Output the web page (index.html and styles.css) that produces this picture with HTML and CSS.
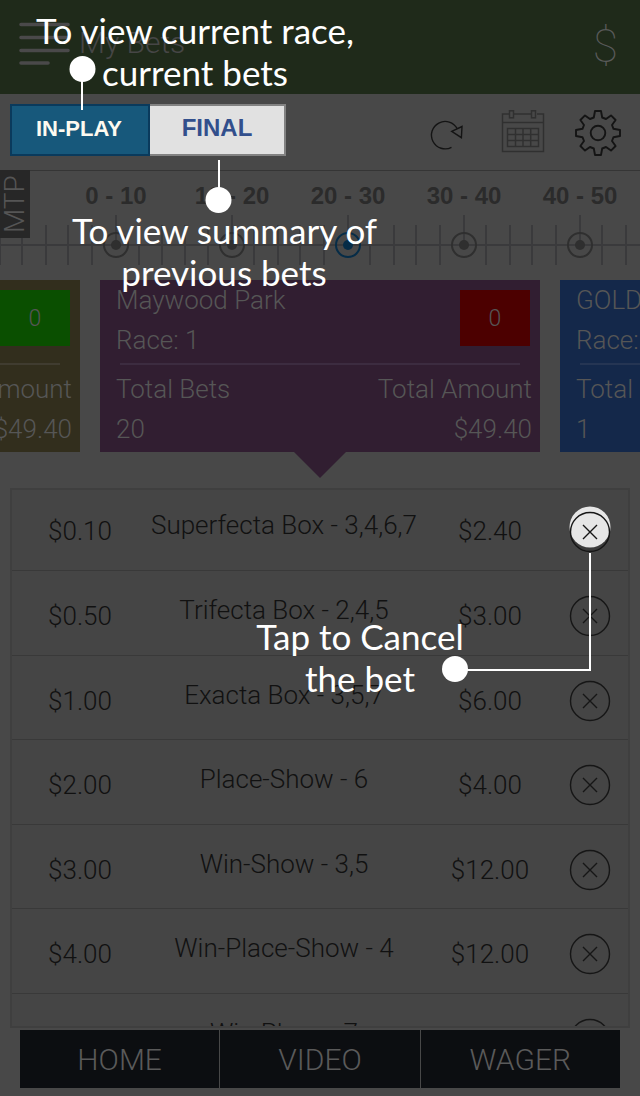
FILE: index.html
```html
<!DOCTYPE html>
<html lang="en">
<head>
<meta charset="utf-8">
<meta name="viewport" content="width=device-width, initial-scale=1">
<title>My Bets</title>
<link rel="stylesheet" href="styles.css">
</head>
<body>
<div class="app">
  <header class="header">
    <button class="icon-button" aria-label="Menu">
      <svg width="52" height="44" viewBox="0 0 52 44" stroke="#4a494a" stroke-width="3.600" stroke-linecap="round"><path d="M2 2.500H49M2 15.500H49M2 28.500H49M2 41H29"/></svg>
    </button>
    <h1 class="title">My Bets</h1>
    <button class="icon-button dollar" aria-label="Balance">$</button>
  </header>

  <div class="toolbar">
    <div class="segment">
      <button class="segment-item active">IN-PLAY</button>
      <button class="segment-item">FINAL</button>
    </div>
    <div class="tools">
      <button class="icon-button" aria-label="Refresh">
        <svg width="36" height="46" viewBox="0 0 36 46" fill="none" stroke="#141414" stroke-width="1.400"><path d="M22.500 37.300A13.700 13.700 0 1 1 28.300 18.800"/><path d="M22.700 21.300L33 16.500L32.400 27.700Z"/></svg>
      </button>
      <button class="icon-button" aria-label="Calendar">
        <svg width="44" height="46" viewBox="0 0 44 46" fill="none" stroke="#303030" stroke-width="1.500"><path d="M8 4H1.500V41.500H42.500V4H36M12 4H30M1.500 12.500H42.500"/><rect x="8.500" y=".8" width="4" height="7"/><rect x="30.500" y=".8" width="4" height="7"/><path d="M6.500 18.500H37.500V36.500H6.500ZM14.500 18.500V36.500M22 18.500V36.500M29.700 18.500V36.500M6.500 24.500H37.500M6.500 30.500H37.500"/></svg>
      </button>
      <button class="icon-button" aria-label="Settings">
        <svg width="46" height="46" viewBox="-23 -23 46 46" fill="none" stroke="#141414" stroke-width="1.900" stroke-linejoin="round"><circle r="7.300"/><path d="M-3-22H3L4.200-15.500L8-14L13-17.600L17.600-13L14-8L15.500-4.200L22-3V3L15.500 4.200L14 8L17.600 13L13 17.600L8 14L4.200 15.500L3 22H-3L-4.200 15.500L-8 14L-13 17.600L-17.600 13L-14 8L-15.500 4.200L-22 3V-3L-15.500-4.200L-14-8L-17.600-13L-13-17.600L-8-14L-4.200-15.500Z"/></svg>
      </button>
    </div>
  </div>

  <section class="timeline" aria-label="Minutes to post">
    <span class="mtp">MTP</span>
    <div class="ranges"><span>0 - 10</span><span>10 - 20</span><span>20 - 30</span><span>30 - 40</span><span>40 - 50</span></div>
    <svg class="ruler" width="640" height="52" viewBox="0 0 640 52" fill="none" stroke="#3a3a3c" stroke-width="2">
      <path d="M0 31H640M0 11V51M22 11V51M46 11V51M68 11V51M92 11V51M139 11V51M162 11V51M185 11V51M208 11V51M254 11V51M278 11V51M300 11V51M324 11V51M370 11V51M394 11V51M416 11V51M440 11V51M486 11V51M510 11V51M532 11V51M556 11V51M602 11V51M626 11V51M116 1V31M232 1V31M348 1V31M464 1V31M580 1V31"/>
      <g stroke="#2f2f2f"><circle cx="116" cy="31" r="12"/><circle cx="232" cy="31" r="12"/><circle cx="464" cy="31" r="12"/><circle cx="580" cy="31" r="12"/></g>
      <g fill="#2f2f2f" stroke="none"><circle cx="116" cy="31" r="5"/><circle cx="232" cy="31" r="5"/><circle cx="464" cy="31" r="5"/><circle cx="580" cy="31" r="5"/></g>
      <circle cx="348" cy="31" r="12" stroke="#062c47"/><circle cx="348" cy="31" r="5" fill="#062c47" stroke="none"/>
    </svg>
  </section>

  <section class="cards">
    <article class="card olive">
      <div class="card-top"><div><h2>Arlington</h2><p>Race: 1</p></div><span class="badge open">0</span></div>
      <hr>
      <dl><div><dt>Total Bets</dt><dd>20</dd></div><div><dt>Total Amount</dt><dd>$49.40</dd></div></dl>
    </article>
    <article class="card purple selected">
      <div class="card-top"><div><h2>Maywood Park</h2><p>Race: 1</p></div><span class="badge closed">0</span></div>
      <hr>
      <dl><div><dt>Total Bets</dt><dd>20</dd></div><div><dt>Total Amount</dt><dd>$49.40</dd></div></dl>
    </article>
    <article class="card blue">
      <div class="card-top"><div><h2>GOLDEN</h2><p>Race: 1</p></div><span class="badge closed">0</span></div>
      <hr>
      <dl><div><dt>Total Bets</dt><dd>1</dd></div><div><dt>Total Amount</dt><dd>$2.00</dd></div></dl>
    </article>
  </section>

  <svg width="0" height="0" class="defs" aria-hidden="true">
    <symbol id="cancel" viewBox="0 0 44 52" overflow="visible"><g fill="none" stroke="#161616" stroke-width="1.400"><circle cx="22" cy="26" r="19.500"/><path d="M15 19L29 33M29 19L15 33"/></g></symbol>
  </svg>

  <main class="bets">
    <table>
      <colgroup><col class="col-stake"><col><col class="col-total"><col class="col-cancel"></colgroup>
      <tbody>
        <tr><td>$0.10</td><td class="bet">Superfecta Box - 3,4,6,7</td><td>$2.40</td><td class="action"><button class="icon-button" aria-label="Cancel bet"><svg width="44" height="52"><circle cx="22" cy="26" r="19" fill="#3b3b3b"/><circle cx="22" cy="21" r="20.500" fill="#e6e6e6"/><use href="#cancel"/></svg></button></td></tr>
        <tr><td>$0.50</td><td class="bet">Trifecta Box - 2,4,5</td><td>$3.00</td><td class="action"><button class="icon-button" aria-label="Cancel bet"><svg width="44" height="52"><use href="#cancel"/></svg></button></td></tr>
        <tr><td>$1.00</td><td class="bet">Exacta Box - 3,5,7</td><td>$6.00</td><td class="action"><button class="icon-button" aria-label="Cancel bet"><svg width="44" height="52"><use href="#cancel"/></svg></button></td></tr>
        <tr><td>$2.00</td><td class="bet">Place-Show - 6</td><td>$4.00</td><td class="action"><button class="icon-button" aria-label="Cancel bet"><svg width="44" height="52"><use href="#cancel"/></svg></button></td></tr>
        <tr><td>$3.00</td><td class="bet">Win-Show - 3,5</td><td>$12.00</td><td class="action"><button class="icon-button" aria-label="Cancel bet"><svg width="44" height="52"><use href="#cancel"/></svg></button></td></tr>
        <tr><td>$4.00</td><td class="bet">Win-Place-Show - 4</td><td>$12.00</td><td class="action"><button class="icon-button" aria-label="Cancel bet"><svg width="44" height="52"><use href="#cancel"/></svg></button></td></tr>
        <tr><td>$5.00</td><td class="bet">Win-Place - 7</td><td>$5.00</td><td class="action"><button class="icon-button" aria-label="Cancel bet"><svg width="44" height="52"><use href="#cancel"/></svg></button></td></tr>
      </tbody>
    </table>
  </main>

  <nav class="nav"><button>HOME</button><button>VIDEO</button><button>WAGER</button></nav>

  <div class="coach">
    <svg class="coach-lines" width="640" height="1096" viewBox="0 0 640 1096" fill="none" stroke="#fff" stroke-width="2">
      <path d="M82 69V110M219 160V200M455 670H590V553"/>
      <g fill="#fff" stroke="none"><circle cx="82.500" cy="69" r="13"/><circle cx="218.500" cy="200" r="13"/><circle cx="455" cy="669" r="13"/></g>
    </svg>
    <p class="hint hint-current">To view current race,<br>current bets</p>
    <p class="hint hint-final">To view summary of<br>previous bets</p>
    <p class="hint hint-cancel">Tap to Cancel<br>the bet</p>
  </div>
</div>
</body>
</html>
```
FILE: styles.css
```css
* { box-sizing: border-box; }

body {
  margin: 0;
  background: #484848;
  font-family: Roboto, "Liberation Sans", sans-serif;
  font-weight: 300;
  font-size: 26px;
}

h1, h2, p, dl, dd { margin: 0; font-weight: 300; }

button { font: inherit; border: 0; cursor: pointer; }
svg { display: block; }

.app {
  position: relative;
  display: flex;
  flex-direction: column;
  height: 100vh;
  overflow: hidden;
}

.defs { position: absolute; }

.icon-button { padding: 0; background: none; }

/* Header */
.header {
  display: flex;
  align-items: center;
  flex: none;
  height: 94px;
  padding: 0 22px 6px 19px;
  gap: 8px;
  background: #1f2a1a;
  color: #464646;
}

.title { flex: 1; padding-bottom: 2px; font-size: 30px; line-height: 40px; }
.dollar { padding-top: 4px; color: #5a5a5a; font-size: 46px; line-height: 52px; font-weight: 100; }

/* Toolbar */
.toolbar {
  display: flex;
  align-items: center;
  justify-content: space-between;
  flex: none;
  height: 77px;
  padding: 0 19px 4px 10px;
  border-bottom: 1px solid #353535;
}

.segment {
  display: flex;
  font-family: "Liberation Sans", Arial, sans-serif;
  font-weight: 700;
}

.segment-item {
  width: 136px;
  height: 52px;
  padding: 0 0 4px;
  border: 2px solid #828282;
  border-left: 0;
  background: #e1e1e1;
  color: #324f8c;
  font-size: 24px;
}

.segment-item.active {
  width: 140px;
  padding: 0 2px 2px 0;
  border: 2px solid #0a3a5c;
  background: #17587b;
  color: #fdfaf0;
  font-size: 22px;
}

.tools { display: flex; align-items: center; gap: 30px; padding-top: 6px; }
.tools .icon-button:first-child { margin-right: 6px; }

/* Timeline */
.timeline { position: relative; flex: none; height: 109px; color: #2b2b2b; }

.mtp {
  position: absolute;
  left: 0;
  top: -1px;
  width: 30px;
  height: 68px;
  background: #272727;
  color: #555;
  font-size: 28px;
  line-height: 30px;
  text-align: center;
  writing-mode: vertical-rl;
  transform: rotate(180deg);
}

.ranges {
  display: grid;
  grid-template-columns: repeat(5, 116px);
  margin-left: 58px;
  padding: 8px 0 1px;
  font: 700 24px/34px "Liberation Sans", Arial, sans-serif;
  text-align: center;
}

.ruler { width: 640px; }

/* Race cards */
.cards {
  display: flex;
  justify-content: center;
  flex: none;
  gap: 20px;
  color: #565656;
}

.card { position: relative; flex: 0 0 440px; height: 172px; line-height: 40px; }
.card.olive { background: #322e1d; }
.card.purple { background: #311e31; }
.card.blue { background: #14284a; }

.card.selected::after {
  content: "";
  position: absolute;
  top: 100%;
  left: 50%;
  margin-left: -26px;
  border: 26px solid transparent;
  border-top-color: #311e31;
  border-bottom: 0;
}

.card-top {
  display: flex;
  justify-content: space-between;
  align-items: flex-start;
  height: 83px;
  padding: 0 10px 0 16px;
}

.card h2 { font-size: inherit; }

.badge {
  width: 70px;
  height: 56px;
  margin-top: 10px;
  font-size: 23px;
  line-height: 58px;
  text-align: center;
}

.badge.open { background: #0a4f00; }
.badge.closed { background: #4c0000; }

.card hr {
  height: 2px;
  margin: 0 20px 4px;
  border: 0;
  background: #3c2c40;
}

.card.olive hr { background: #403c30; }
.card.blue hr { background: #253553; }

.card dl { display: flex; justify-content: space-between; padding: 0 8px 0 16px; }
.card dl div:last-child { text-align: right; }

/* Bets table */
.bets {
  flex: 1;
  min-height: 0;
  margin: 36px 10px 2px;
  overflow: hidden;
  border: 2px solid #3f3f3f;
  background: #454545;
  color: #111;
}

.bets table {
  width: 100%;
  table-layout: fixed;
  border-spacing: 0;
  text-align: center;
  white-space: nowrap;
}

.col-stake { width: 136px; }
.col-total { width: 140px; }
.col-cancel { width: 68px; }

.bets td { height: 85px; padding: 6px 0 0; border-bottom: 1px solid #393939; }
.bets tr:nth-child(odd) td { height: 84px; }
.bets tr:first-child td { height: 81px; padding-top: 2px; }
.bets .bet { padding: 0 0 6px; }
.bets tr:first-child .bet { padding: 0 0 10px; }
.bets .action { padding-right: 8px; }
.bets tr:first-child .action { padding-top: 4px; }
.action .icon-button { display: block; margin: 0 auto; }

/* Bottom navigation */
.nav { display: flex; flex: none; margin: 0 20px 8px; }
.nav button {
  flex: 1;
  height: 58px;
  padding: 0;
  background: #0c0e11;
  color: #5a5a5a;
  font-size: 30px;
}
.nav button:not(:last-child) { border-right: 1px solid #484848; }

/* Coach marks */
.coach { position: absolute; inset: 0; pointer-events: none; }

.hint {
  position: absolute;
  display: flex;
  justify-content: center;
  color: #fff;
  font: 400 35px/42px "Segoe Print", "Bradley Hand", Lato, sans-serif;
  text-align: center;
  white-space: nowrap;
}

.hint { display: block; }
.hint-current { left: 33px; top: 9px; width: 324px; }
.hint-final { left: 72px; top: 209px; width: 304px; }
.hint-cancel { left: 252px; top: 615px; width: 216px; }
```
